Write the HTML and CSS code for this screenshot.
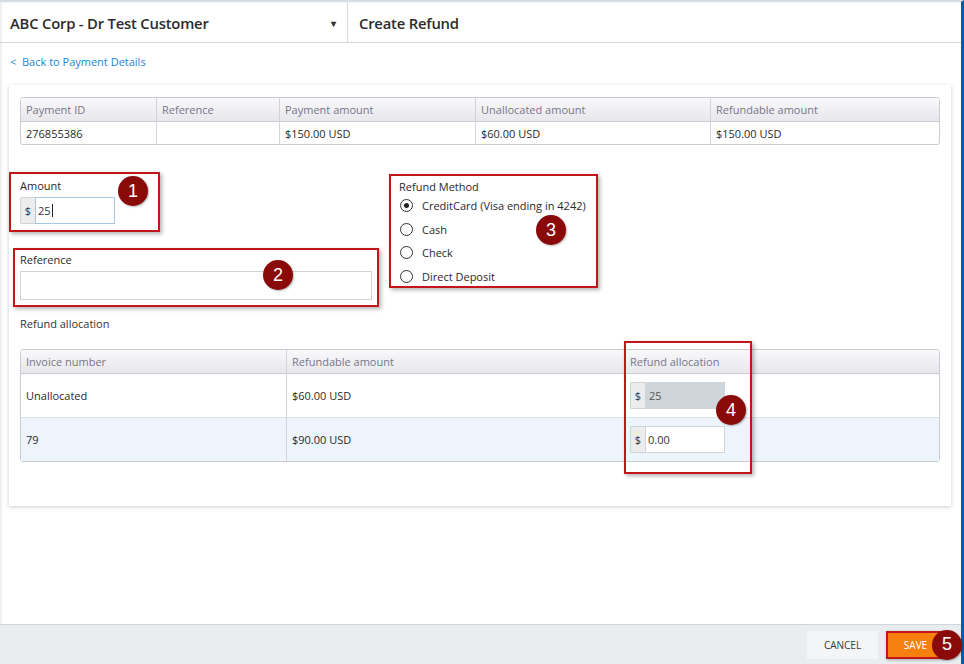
FILE: index.html
```html
<!DOCTYPE html>
<html>
  <head>
    <meta charset="UTF-8" />
    <title>Create Refund</title>
    <link rel="stylesheet" href="styles.css">
  </head>
  <body>
    <div class="shell">
      <header class="topbar">
        <div class="customer">
          <span>ABC Corp - Dr Test Customer</span>
          <span class="caret">&#9662;</span>
        </div>
        <div class="page-title">Create Refund</div>
      </header>

      <main class="content">
        <a class="back" href="#">&lt;&nbsp; Back to Payment Details</a>

        <section class="card">
          <table class="grid payment">
            <thead>
              <tr>
                <th class="c1">Payment ID</th>
                <th class="c2">Reference</th>
                <th class="c3">Payment amount</th>
                <th class="c4">Unallocated amount</th>
                <th>Refundable amount</th>
              </tr>
            </thead>
            <tbody>
              <tr>
                <td>276855386</td>
                <td></td>
                <td>$150.00 USD</td>
                <td>$60.00 USD</td>
                <td>$150.00 USD</td>
              </tr>
            </tbody>
          </table>

          <div class="form-row">
            <div class="left-col">
              <div class="callout amount-box">
                <label class="field-label">Amount</label>
                <div class="money focus">
                  <span class="addon">$</span>
                  <span class="money-input">25<span class="cursor"></span></span>
                </div>
                <span class="badge b1">1</span>
              </div>

              <div class="callout ref-box">
                <label class="field-label">Reference</label>
                <div class="text-input"></div>
                <span class="badge b2">2</span>
              </div>
            </div>

            <div class="callout method-box">
              <div class="field-label">Refund Method</div>
              <div class="radio checked"><span class="dot"></span>CreditCard (Visa ending in 4242)</div>
              <div class="radio"><span class="dot"></span>Cash</div>
              <div class="radio"><span class="dot"></span>Check</div>
              <div class="radio"><span class="dot"></span>Direct Deposit</div>
              <span class="badge b3">3</span>
            </div>
          </div>

          <div class="section-label">Refund allocation</div>

          <div class="alloc-wrap">
            <table class="grid alloc">
              <thead>
                <tr>
                  <th class="a1">Invoice number</th>
                  <th class="a2">Refundable amount</th>
                  <th>Refund allocation</th>
                </tr>
              </thead>
              <tbody>
                <tr>
                  <td>Unallocated</td>
                  <td>$60.00 USD</td>
                  <td>
                    <div class="money">
                      <span class="addon">$</span>
                      <span class="money-input disabled">25</span>
                    </div>
                  </td>
                </tr>
                <tr class="alt">
                  <td>79</td>
                  <td>$90.00 USD</td>
                  <td>
                    <div class="money">
                      <span class="addon">$</span>
                      <span class="money-input">0.00</span>
                    </div>
                  </td>
                </tr>
              </tbody>
            </table>
            <div class="callout-over">
              <span class="badge b4">4</span>
            </div>
          </div>
        </section>
      </main>

      <footer class="actions">
        <button class="btn cancel">CANCEL</button>
        <div class="save-wrap">
          <button class="btn save">SAVE</button>
          <span class="badge b5">5</span>
        </div>
      </footer>
    </div>
  </body>
</html>
```

FILE: styles.css
```css
html,
body {
  margin: 0;
  padding: 0;
  height: 100%;
}

body {
  font-family: "Open Sans", "Noto Sans", sans-serif;
  font-size: 11px;
  color: #333;
  background: #fff;
}

.shell {
  height: 664px;
  display: flex;
  flex-direction: column;
  border-right: 3px solid #0d5aa3;
  box-shadow: inset 3px 0 3px -2px #e4e4e4;
  border-top: 2px solid #d6dde6;
  box-sizing: border-box;
}

/* header */
.topbar {
  display: flex;
  height: 40px;
  border-bottom: 1px solid #cdd6dd;
  box-shadow: inset 0 2px 3px -2px #e3e8ee;
  flex-shrink: 0;
}
.customer {
  width: 327px;
  padding: 0 10px;
  border-right: 1px solid #d3dbe1;
  display: flex;
  align-items: center;
  justify-content: space-between;
  font-size: 14.8px;
  font-weight: 600;
  letter-spacing: -0.2px;
  color: #2b2b2b;
  padding-top: 1px;
}
.customer .caret {
  font-size: 10px;
  color: #333;
  margin-right: 1px;
}
.page-title {
  padding-left: 11px;
  padding-top: 1px;
  display: flex;
  align-items: center;
  font-size: 14.8px;
  font-weight: 600;
  letter-spacing: -0.2px;
  color: #2b2b2b;
}

/* content */
.content {
  flex: 1;
  padding: 12px 10px 0 9px;
}
.back {
  display: block;
  margin-left: 1px;
  color: #1b86d6;
  text-decoration: none;
  font-size: 11px;
  line-height: 14px;
}

.card {
  margin-top: 16px;
  width: 942px;
  box-sizing: border-box;
  padding: 12px 11px 44px 11px;
  background: #fff;
  box-shadow: 0 1px 4px rgba(0, 0, 0, 0.2);
}

/* tables */
.grid {
  width: 100%;
  border-collapse: separate;
  border-spacing: 0;
  border: 1px solid #cbcbd3;
  border-radius: 3px;
}
.grid th {
  text-align: left;
  font-weight: normal;
  color: #77748a;
  height: 23px;
  padding: 0 5px;
  background: linear-gradient(#f9f9fb, #e7e7ec);
  border-bottom: 1px solid #cbcbd3;
  border-right: 1px solid #d3d3da;
}
.grid td {
  padding: 0 5px;
  border-right: 1px solid #d3d3da;
  color: #2a2a2a;
}
.grid th:last-child,
.grid td:last-child {
  border-right: none;
}
.payment td {
  height: 22px;
}
.payment .c1 { width: 125px; }
.payment .c2 { width: 112px; }
.payment .c3 { width: 185px; }
.payment .c4 { width: 224px; }

/* form */
.form-row {
  display: flex;
  gap: 10px;
  margin-top: 27px;
}
.left-col {
  width: 370px;
  margin-left: -11px;
}
.callout {
  position: relative;
  border: 2px solid #c3161c;
  box-shadow: 2px 2px 4px rgba(0, 0, 0, 0.3);
  box-sizing: border-box;
}
.field-label {
  display: block;
  line-height: 14px;
  color: #2a2a2a;
}
.amount-box {
  width: 151px;
  height: 60px;
  padding: 5px 0 0 9px;
}
.amount-box .money {
  margin-top: 4px;
}
.ref-box {
  margin-top: 16px;
  margin-left: 4px;
  width: 366px;
  height: 59px;
  padding: 3px 0 0 5px;
}
.text-input {
  margin-top: 4px;
  width: 352px;
  height: 29px;
  box-sizing: border-box;
  border: 1px solid #cfd4d8;
}

.money {
  display: flex;
  width: 95px;
  height: 27px;
}
.addon {
  width: 15px;
  box-sizing: border-box;
  background: #ececec;
  border: 1px solid #d0d4d8;
  border-right: none;
  border-radius: 2px 0 0 2px;
  display: flex;
  align-items: center;
  justify-content: center;
  color: #333;
}
.money-input {
  flex: 1;
  box-sizing: border-box;
  border: 1px solid #d0d4d8;
  background: #fff;
  display: flex;
  align-items: center;
  padding-left: 2px;
  color: #333;
}
.focus .money-input {
  border-color: #a9c7dd;
}
.money-input.disabled {
  background: #cfd6db;
  border-color: #cfd6db;
  color: #555;
  padding-left: 3px;
}
.cursor {
  display: inline-block;
  width: 1px;
  height: 13px;
  background: #222;
  margin-left: 1px;
}

.method-box {
  width: 209px;
  height: 114px;
  margin-top: 2px;
  padding: 4px 0 0 8px;
}
.radio {
  display: flex;
  align-items: center;
  height: 23.6px;
  color: #2a2a2a;
}
.dot {
  width: 11px;
  height: 11px;
  border: 1px solid #333;
  border-radius: 50%;
  margin: 0 9px 0 1px;
  position: relative;
  background: #fff;
}
.checked .dot::after {
  content: "";
  position: absolute;
  left: 3px;
  top: 3px;
  width: 5px;
  height: 5px;
  border-radius: 50%;
  background: #222;
}

.section-label {
  margin-top: 10px;
  line-height: 14px;
}

.alloc-wrap {
  position: relative;
  margin-top: 18px;
}
.alloc td {
  height: 43px;
  border-bottom: 1px solid #dde2e8;
}
.alloc tr:last-child td {
  border-bottom: none;
}
.alloc tr.alt td {
  background: #edf4fc;
}
.alloc .a1 { width: 255px; }
.alloc .a2 { width: 327px; }

.callout-over {
  position: absolute;
  left: 604px;
  top: -8px;
  width: 128px;
  height: 133px;
  border: 2px solid #c3161c;
  box-shadow: 2px 2px 4px rgba(0, 0, 0, 0.3);
  box-sizing: border-box;
}

/* badges */
.badge {
  position: absolute;
  width: 30px;
  height: 30px;
  border-radius: 50%;
  background: #8a0a0a;
  color: #fff;
  font-family: "Liberation Sans", Arial, sans-serif;
  font-size: 18px;
  display: flex;
  align-items: center;
  justify-content: center;
  box-shadow: 1px 1px 2px rgba(0, 0, 0, 0.3);
}
.b1 { left: 107px; top: 2px; }
.b2 { left: 248px; top: 10px; }
.b3 { left: 145px; top: 39px; }
.b4 { left: 90px; top: 52px; }
.b5 { left: 46px; top: -1px; }

/* footer */
.actions {
  height: 39px;
  flex-shrink: 0;
  background: #e9edf0;
  border-top: 1px solid #cfd6dd;
  display: flex;
  align-items: center;
  justify-content: flex-end;
  gap: 8px;
  padding-right: 16px;
}
.btn {
  font-family: "Open Sans", sans-serif;
  font-size: 10px;
  height: 28px;
  border: none;
  cursor: pointer;
}
.cancel {
  width: 71px;
  background: #f4f5f7;
  color: #3a3a3a;
}
.save-wrap {
  position: relative;
}
.save {
  width: 59px;
  background: #f77f0e;
  color: #fff;
  border: 2px solid #c3161c;
  box-shadow: 1px 1px 3px rgba(0, 0, 0, 0.3);
}
```
